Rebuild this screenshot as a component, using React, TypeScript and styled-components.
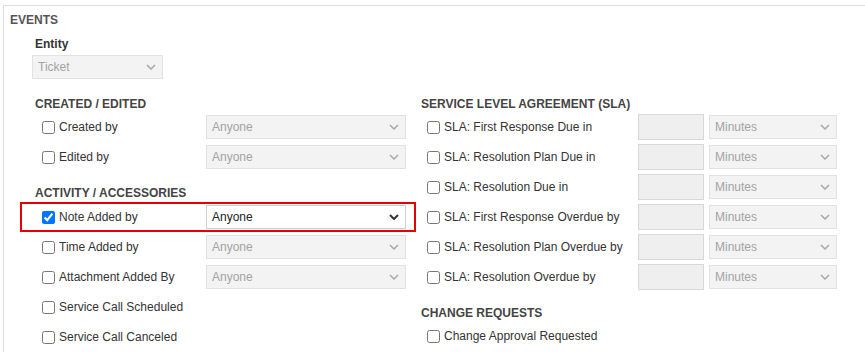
import styled, { createGlobalStyle } from "styled-components"

const GlobalStyle = createGlobalStyle`
  body {
    margin: 0;
    background: #fff;
    font-family: "Liberation Sans", Arial, sans-serif;
    font-size: 12px;
    color: #333;
  }
`

const Panel = styled.section`
  margin: 5px 0 0 3px;
  min-height: 347px;
  border-top: 1px solid #ddd;
  border-left: 1px solid #ddd;
  padding: 7px 0 0 6px;
  box-sizing: border-box;
`

const PanelTitle = styled.div`
  font-weight: bold;
  line-height: 14px;
  color: #555;
`

const PanelBody = styled.div`
  padding-left: 25px;
`

const FieldLabel = styled.div`
  margin-top: 10px;
  font-weight: bold;
  line-height: 14px;
  color: #333;
`

const EntityWrap = styled.div`
  margin: 4px 0 0 -3px;
`

const Columns = styled.div`
  display: grid;
  grid-template-columns: 386px 1fr;
  margin-top: 18px;
`

const Column = styled.div``

// $gap: space above the heading, $after: space down to the first row
const SectionHeading = styled.div<{ $gap?: number; $after?: number }>`
  margin-top: ${(p) => p.$gap ?? 0}px;
  margin-bottom: ${(p) => p.$after ?? 1}px;
  font-weight: bold;
  line-height: 14px;
  color: #444;
`

const Row = styled.div<{ $highlight?: boolean }>`
  display: grid;
  grid-template-columns: 171px 200px;
  align-items: center;
  box-sizing: content-box;
  width: 371px;
  height: 30px;
  ${(p) =>
    p.$highlight &&
    `
    margin-left: -15px;
    padding-left: 15px;
    padding-right: 10px;
    outline: 2px solid #e60000;
    outline-offset: -2px;
  `}
`

const SlaRow = styled.div`
  display: grid;
  grid-template-columns: 212px 66px 128px;
  column-gap: 5px;
  align-items: center;
  height: 30px;
`

const CheckLabel = styled.label<{ $indent: number }>`
  display: flex;
  align-items: center;
  gap: 4px;
  padding-left: ${(p) => p.$indent}px;
  color: #333;
  white-space: nowrap;
`

const CheckBox = styled.input`
  width: 13px;
  height: 13px;
  margin: 0;
`

const SelectBox = styled.div<{ $disabled?: boolean; $width: number }>`
  display: flex;
  align-items: center;
  justify-content: space-between;
  box-sizing: border-box;
  width: ${(p) => p.$width}px;
  height: 24px;
  padding: 0 6px 0 5px;
  border: 1px solid ${(p) => (p.$disabled ? "#e2e2e2" : "#cfcfcf")};
  background: ${(p) => (p.$disabled ? "#f3f3f3" : "#fff")};
  color: ${(p) => (p.$disabled ? "#a3a3a3" : "#222")};
`

const NumberBox = styled.div`
  box-sizing: border-box;
  width: 66px;
  height: 26px;
  border: 1px solid #d8d8d8;
  background: #efefef;
`

function Chevron({ dark }: { dark?: boolean }) {
  return (
    <svg width="10" height="6" viewBox="0 0 10 6" fill="none">
      <path
        d="M1 1l4 4 4-4"
        stroke={dark ? "#333" : "#a8a8a8"}
        strokeWidth={dark ? 2 : 1.5}
      />
    </svg>
  )
}

function Select({ value, width, enabled }: { value: string; width: number; enabled?: boolean }) {
  return (
    <SelectBox $disabled={!enabled} $width={width}>
      <span>{value}</span>
      <Chevron dark={enabled} />
    </SelectBox>
  )
}

function Check({ label, checked, indent }: { label: string; checked?: boolean; indent: number }) {
  return (
    <CheckLabel $indent={indent}>
      <CheckBox type="checkbox" defaultChecked={checked} />
      <span>{label}</span>
    </CheckLabel>
  )
}

const slaRows = [
  "SLA: First Response Due in",
  "SLA: Resolution Plan Due in",
  "SLA: Resolution Due in",
  "SLA: First Response Overdue by",
  "SLA: Resolution Plan Overdue by",
  "SLA: Resolution Overdue by",
]

export default function App() {
  return (
    <>
      <GlobalStyle />
      <Panel>
        <PanelTitle>EVENTS</PanelTitle>
        <PanelBody>
          <FieldLabel>Entity</FieldLabel>
          <EntityWrap>
            <Select value="Ticket" width={131} />
          </EntityWrap>
          <Columns>
            <Column>
              <SectionHeading>CREATED / EDITED</SectionHeading>
              <Row>
                <Check label="Created by" indent={7} />
                <Select value="Anyone" width={200} />
              </Row>
              <Row>
                <Check label="Edited by" indent={7} />
                <Select value="Anyone" width={200} />
              </Row>
              <SectionHeading $gap={14} $after={2}>ACTIVITY / ACCESSORIES</SectionHeading>
              <Row $highlight>
                <Check label="Note Added by" checked indent={7} />
                <Select value="Anyone" width={200} enabled />
              </Row>
              <Row>
                <Check label="Time Added by" indent={7} />
                <Select value="Anyone" width={200} />
              </Row>
              <Row>
                <Check label="Attachment Added By" indent={7} />
                <Select value="Anyone" width={200} />
              </Row>
              <Row>
                <Check label="Service Call Scheduled" indent={7} />
              </Row>
              <Row>
                <Check label="Service Call Canceled" indent={7} />
              </Row>
            </Column>
            <Column>
              <SectionHeading>SERVICE LEVEL AGREEMENT (SLA)</SectionHeading>
              {slaRows.map((label) => (
                <SlaRow key={label}>
                  <Check label={label} indent={6} />
                  <NumberBox />
                  <Select value="Minutes" width={128} />
                </SlaRow>
              ))}
              <SectionHeading $gap={14}>CHANGE REQUESTS</SectionHeading>
              <SlaRow>
                <Check label="Change Approval Requested" indent={6} />
              </SlaRow>
            </Column>
          </Columns>
        </PanelBody>
      </Panel>
    </>
  )
}
